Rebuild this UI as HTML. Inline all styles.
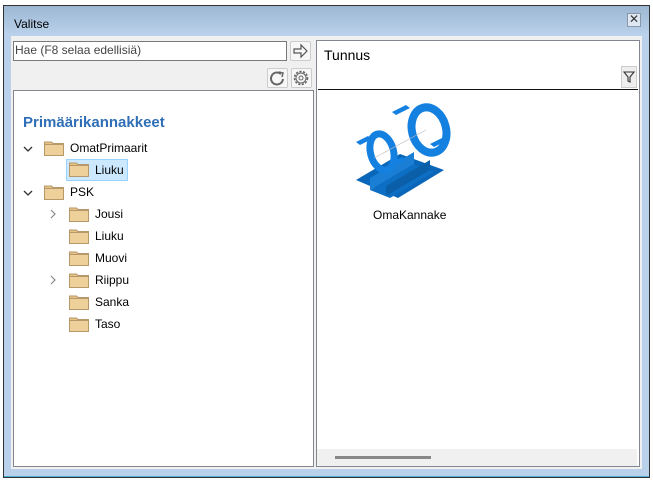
<!DOCTYPE html>
<html><head><style>
*{margin:0;padding:0;box-sizing:border-box}
body{width:653px;height:481px;background:#fff;position:relative;overflow:hidden;font-family:"Liberation Sans",sans-serif;font-size:12px;color:#000}
.a{position:absolute}
.t{position:absolute;font-size:12px}
</style></head><body>
<div class="a" style="left:3px;top:5px;width:647px;height:473px;border:1px solid #333;border-bottom:2px solid #333;background:#b9d1ea"></div>
<div class="a" style="left:4px;top:476px;width:645px;height:1px;background:#4ab0d8"></div>
<div class="a" style="left:4px;top:6px;width:645px;height:30px;background:linear-gradient(#9db7d3,#bad2eb)"></div>
<div class="t" style="left:14px;top:17px">Valitse</div>
<div class="a" style="left:627px;top:13px;width:14px;height:14px;border:1px solid #8a97a6;background:#dfe8f2;font-size:12px;line-height:11px;text-align:center;color:#333">✕</div>
<div class="a" style="left:11px;top:36px;width:303px;height:433px;background:#f0f0f0"></div>
<div class="a" style="left:13px;top:41px;width:274px;height:20px;border:1px solid #7a7a7a;background:#fff"></div>
<div class="t" style="left:15px;top:43px;color:#444">Hae (F8 selaa edellisiä)</div>
<div class="a" style="left:290px;top:41px;width:21px;height:20px;border:1px solid #ccc;border-radius:2px;background:#f7f7f7"></div>
<svg class="a" style="left:292px;top:43px" width="17" height="16"><path d="M2 6h7V2l6 6-6 6v-4H2z" fill="none" stroke="#555" stroke-width="1.2"/></svg>
<div class="a" style="left:267px;top:68px;width:21px;height:20px;border:1px solid #ccc;border-radius:2px;background:#f7f7f7"></div>
<svg class="a" style="left:269px;top:70px" width="17" height="16"><path d="M12 4A6 6 0 1 0 14 9" fill="none" stroke="#666" stroke-width="2"/><path d="M10 2l4 1-1 4" fill="none" stroke="#666" stroke-width="1.5"/></svg>
<div class="a" style="left:291px;top:68px;width:21px;height:20px;border:1px solid #ccc;border-radius:2px;background:#f7f7f7"></div>
<svg class="a" style="left:292px;top:69px" width="18" height="18"><circle cx="9" cy="9" r="6.5" fill="none" stroke="#666" stroke-width="1.6" stroke-dasharray="2.2 1.4"/><circle cx="9" cy="9" r="5" fill="none" stroke="#666" stroke-width="1"/><circle cx="9" cy="9" r="2" fill="none" stroke="#666" stroke-width="1"/></svg>
<div class="a" style="left:13px;top:90px;width:301px;height:377px;border:1px solid #828790;background:#fff"></div>
<div class="t" style="left:23px;top:114px;font-size:15px;font-weight:bold;color:#2f6fb7">Primäärikannakkeet</div>
<div class="a" style="left:66px;top:159px;width:62px;height:22px;background:#cce8ff;border:1px solid #99d1ff"></div>
<svg width="0" height="0" style="position:absolute"><defs><g id="f"><path d="M0.5 3.5v-2.5h7l1.5 1.5h10.5v12h-19z" fill="#e3c384" stroke="#b8976a"/><rect x="0.5" y="3.5" width="19" height="11" fill="#edd09a" stroke="#b8976a"/></g></defs></svg>
<svg class="a" style="left:44px;top:141px" width="21" height="16"><use href="#f"/></svg>
<svg class="a" style="left:69px;top:162px" width="21" height="16"><use href="#f"/></svg>
<svg class="a" style="left:44px;top:185px" width="21" height="16"><use href="#f"/></svg>
<svg class="a" style="left:69px;top:207px" width="21" height="16"><use href="#f"/></svg>
<svg class="a" style="left:69px;top:229px" width="21" height="16"><use href="#f"/></svg>
<svg class="a" style="left:69px;top:251px" width="21" height="16"><use href="#f"/></svg>
<svg class="a" style="left:69px;top:273px" width="21" height="16"><use href="#f"/></svg>
<svg class="a" style="left:69px;top:295px" width="21" height="16"><use href="#f"/></svg>
<svg class="a" style="left:69px;top:317px" width="21" height="16"><use href="#f"/></svg>
<svg class="a" style="left:23px;top:145px" width="10" height="8"><path d="M1 2l4 4 4-4" fill="none" stroke="#333" stroke-width="1.3"/></svg>
<svg class="a" style="left:23px;top:189px" width="10" height="8"><path d="M1 2l4 4 4-4" fill="none" stroke="#333" stroke-width="1.3"/></svg>
<svg class="a" style="left:49px;top:209px" width="8" height="10"><path d="M2 1l4 4-4 4" fill="none" stroke="#888" stroke-width="1.2"/></svg>
<svg class="a" style="left:49px;top:275px" width="8" height="10"><path d="M2 1l4 4-4 4" fill="none" stroke="#888" stroke-width="1.2"/></svg>
<div class="t" style="left:70px;top:141px">OmatPrimaarit</div>
<div class="t" style="left:95px;top:163px">Liuku</div>
<div class="t" style="left:70px;top:185px">PSK</div>
<div class="t" style="left:95px;top:207px">Jousi</div>
<div class="t" style="left:95px;top:229px">Liuku</div>
<div class="t" style="left:95px;top:251px">Muovi</div>
<div class="t" style="left:95px;top:273px">Riippu</div>
<div class="t" style="left:95px;top:295px">Sanka</div>
<div class="t" style="left:95px;top:317px">Taso</div>
<div class="a" style="left:314px;top:36px;width:328px;height:433px;background:#f0f0f0"></div>
<div class="a" style="left:316px;top:40px;width:324px;height:427px;border:1px solid #828790;background:#fff"></div>
<div class="t" style="left:324px;top:47px;font-size:14px">Tunnus</div>
<div class="a" style="left:318px;top:89px;width:320px;height:1px;background:#111"></div>
<div class="a" style="left:621px;top:66px;width:16px;height:22px;background:#eee;border:1px solid #ccc"></div>
<svg class="a" style="left:622px;top:70px" width="14" height="14"><path d="M2 2h10L8 7v5l-2-1V7z" fill="none" stroke="#333" stroke-width="1.1"/></svg>
<div class="a" style="left:317px;top:449px;width:320px;height:17px;background:#f0f0f0"></div>
<div class="a" style="left:335px;top:456px;width:96px;height:3px;background:#888"></div>
<svg class="a" style="left:352px;top:100px" width="100" height="100" viewBox="0 0 100 100">
<path d="M4 80l44-26 44 16-46 28z" fill="#0a66b8"/>
<path d="M18 78l44-26v12l-44 26z" fill="#1a7fd4"/>
<path d="M18 90l44-26 20 8-44 26z" fill="#0d6fc4"/>
<path d="M34 96v-10l44-26v10z" fill="#0b5fa8"/>
<ellipse cx="30" cy="52" rx="11.5" ry="18.5" transform="rotate(-15 30 52)" fill="none" stroke="#1480e0" stroke-width="7"/>
<ellipse cx="77" cy="30" rx="17" ry="23" transform="rotate(-15 77 30)" fill="none" stroke="#1480e0" stroke-width="8"/>
<path d="M4 42l12-6 4 3-12 6z" fill="#1480e0"/><path d="M40 12l14-7 4 3-14 7z" fill="#1480e0"/>
<path d="M78 44l12-6 4 3-12 6z" fill="#1480e0"/><path d="M40 62l10-5 4 3-10 5z" fill="#1480e0"/>
<line x1="22" y1="58" x2="74" y2="30" stroke="#bbb" stroke-width="0.6"/>
</svg>
<div class="t" style="left:373px;top:208px">OmaKannake</div>
</body></html>
